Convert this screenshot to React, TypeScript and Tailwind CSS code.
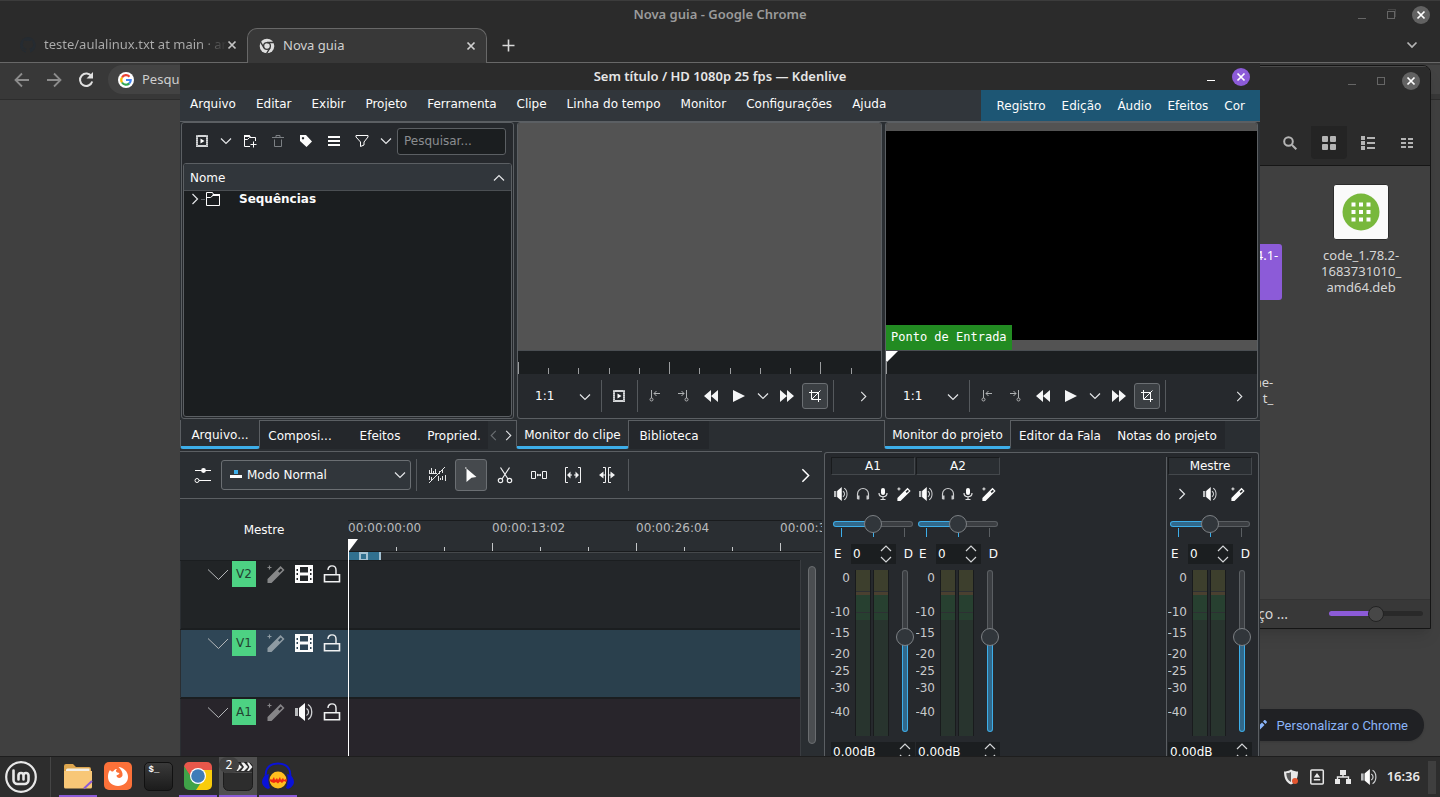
import React from "react";

type IconProps = { className?: string };

function Chevron({ dir = "down", size = 12, className = "text-[#e4e6e8]" }: { dir?: "down" | "up" | "left" | "right"; size?: number; className?: string }) {
  const paths = {
    down: "M1 3.5 6 8.5 11 3.5",
    up: "M1 8.5 6 3.5 11 8.5",
    left: "M8.5 1 3.5 6 8.5 11",
    right: "M3.5 1 8.5 6 3.5 11",
  };
  return (
    <svg width={size} height={size} viewBox="0 0 12 12" className={className} fill="none" stroke="currentColor" strokeWidth="1.2" aria-hidden="true">
      <path d={paths[dir]} />
    </svg>
  );
}

const ClipIcon = () => (
  <svg width="12" height="12" viewBox="0 0 12 12" aria-hidden="true">
    <rect x="1" y="1" width="10" height="10" fill="none" stroke="#d4d6d8" strokeWidth="2" />
    <path d="M1 0v12M11 0v12" stroke="#8d9093" strokeWidth="1" strokeDasharray="1 1" />
    <path d="M4.5 3.5 8.5 6 4.5 8.5z" fill="#fcfcfc" />
  </svg>
);

const FolderPlus = () => (
  <svg width="14" height="14" viewBox="0 0 14 14" fill="none" stroke="#fcfcfc" aria-hidden="true">
    <path d="M7 12.5H1.500V1.500h5l1 2h5V7M1.500 5.500h3l2-2H12" />
    <path d="M1 1h5.500l1 2H1z" fill="#fcfcfc" stroke="none" />
    <path d="M10.500 7.500v6M7.500 10.500h6" />
  </svg>
);

const Folder = () => (
  <svg width="16" height="16" viewBox="0 0 16 16" fill="none" stroke="#fcfcfc" aria-hidden="true" className="shrink-0">
    <path d="M1.500 1.500h6l1 2h6v11h-13zM1.500 6.500h4l2.500-2h6.500" />
    <path d="M8 3h7v2H7z" fill="#fcfcfc" stroke="none" />
  </svg>
);

const Trash = () => (
  <svg width="12" height="12" viewBox="0 0 12 12" fill="none" stroke="#7c8084" aria-hidden="true">
    <path d="M0 2.500h12M4 2.500V.5h4v2M2.500 4.500v7h7v-7" />
  </svg>
);

const Tag = () => (
  <svg width="14" height="14" viewBox="0 0 14 14" fill="#fcfcfc" aria-hidden="true">
    <path fillRule="evenodd" d="M1 1h6l6 6.500L7.500 13 1 7zM4 3a1.200 1.200 0 1 0 .01 0z" />
  </svg>
);

const Lines = () => (
  <svg width="12" height="12" viewBox="0 0 12 12" fill="#fcfcfc" aria-hidden="true">
    <path d="M0 1h12v2H0zM0 5h12v2H0zM0 9h12v2H0z" />
  </svg>
);

const Funnel = () => (
  <svg width="14" height="12" viewBox="0 0 14 12" fill="none" stroke="#fcfcfc" aria-hidden="true">
    <path d="M1 .5h12v1.500L9 7v3L5.500 11.500V7L1 2z" />
  </svg>
);

const MarkIn = () => (
  <svg width="12" height="12" viewBox="0 0 12 12" fill="none" stroke="#aeb1b3" aria-hidden="true">
    <path d="M2.500 0v8M5 3.500h6M7.500 1 5 3.500 7.500 6" />
    <circle cx="2.500" cy="9.500" r="1.500" />
  </svg>
);

const MarkOut = () => (
  <svg width="12" height="12" viewBox="0 0 12 12" fill="none" stroke="#aeb1b3" aria-hidden="true">
    <path d="M9.500 0v8M1 3.500h6M4.500 1 7 3.500 4.500 6" />
    <circle cx="9.500" cy="9.500" r="1.500" />
  </svg>
);

const Rewind = () => (
  <svg width="16" height="12" viewBox="0 0 16 12" fill="#f4f5f6" aria-hidden="true">
    <path d="M8 0v12L1 6zM15 0v12L8 6z" />
  </svg>
);
const Forward = () => (
  <svg width="16" height="12" viewBox="0 0 16 12" fill="#f4f5f6" aria-hidden="true">
    <path d="M1 0v12l7-6zM8 0v12l7-6z" />
  </svg>
);
const Play = () => (
  <svg width="12" height="12" viewBox="0 0 12 12" fill="#f4f5f6" aria-hidden="true">
    <path d="M0 0v12l12-6z" />
  </svg>
);
const Crop = () => (
  <svg width="14" height="14" viewBox="0 0 14 14" fill="none" stroke="#fcfcfc" aria-hidden="true">
    <path d="M3.500 1v9.500H13M1 3.500h9.500V13M4 10 12.500 1.500" />
  </svg>
);

const Speaker = ({ className = "h-3.5 w-3.5" }: IconProps) => (
  <svg viewBox="0 0 18 18" className={className} aria-hidden="true">
    <path d="M0 5h3v8H0z" fill="#b9bbbd" />
    <path d="M4 5 10 0v18l-6-5z" fill="#fcfcfc" />
    <path d="M11.500 5.500a4 4 0 0 1 0 7M13 1.500c5 3 5 12 0 15" fill="none" stroke="#d0d2d4" strokeWidth="1.300" />
  </svg>
);

const Headphones = () => (
  <svg width="14" height="14" viewBox="0 0 14 14" aria-hidden="true">
    <path d="M1.500 12V7a5.500 5.500 0 0 1 11 0v5" fill="none" stroke="#c8cacc" strokeWidth="1.200" />
    <path d="M1.500 8.500h2v4h-2zM10.500 8.500h2v4h-2z" fill="#c8cacc" />
  </svg>
);

const Mic = () => (
  <svg width="12" height="14" viewBox="0 0 12 14" aria-hidden="true">
    <rect x="4" y="1" width="4" height="7" rx="2" fill="#fcfcfc" />
    <path d="M2 6c0 5 8 5 8 0M6 10v2.500M3.500 12.500h5" fill="none" stroke="#e0e1e2" strokeWidth="1.200" />
  </svg>
);

const Wand = ({ className = "h-3.5 w-3.5 text-[#fcfcfc]" }: IconProps) => (
  <svg viewBox="0 0 18 18" className={className} aria-hidden="true">
    <path fillRule="evenodd" fill="currentColor" d="M.5 14 13.500 1 17.500 5 4.500 18H.5zM11 6.200 12.600 7.800 15.400 5 13.800 3.400z" />
    <path d="M2.500 .5v4M.5 2.500h4" stroke="currentColor" strokeWidth="1.200" />
  </svg>
);

const Film = () => (
  <svg width="18" height="18" viewBox="0 0 18 18" aria-hidden="true">
    <path fillRule="evenodd" fill="#fcfcfc" d="M0 0h18v18H0zM5 2v5.500h8V2zM5 10.500V16h8v-5.500zM1.500 4v2H3V4zM15 4v2h1.500V4zM1.500 8v2H3V8zM15 8v2h1.500V8zM1.500 13v2H3v-2zM15 13v2h1.500v-2z" />
  </svg>
);

const Lock = () => (
  <svg width="18" height="18" viewBox="0 0 18 18" fill="none" stroke="#f0f1f2" aria-hidden="true">
    <path strokeWidth="1.600" d="M1.500 9.800h15v7h-15z" />
    <path strokeWidth="1.400" d="M5 5c0-5.500 8-5.500 8 0v4.500" />
  </svg>
);

const CloseX = ({ className }: IconProps) => (
  <svg width="10" height="10" viewBox="0 0 10 10" className={className} stroke="currentColor" strokeWidth="1.700" aria-hidden="true">
    <path d="m1.500 1.500 7 7M8.500 1.500l-7 7" />
  </svg>
);

const ChromeMono = () => (
  <svg width="16" height="16" viewBox="0 0 16 16" aria-hidden="true">
    <circle cx="8" cy="8" r="7.300" fill="#dedede" />
    <circle cx="8" cy="8" r="3.400" fill="#dedede" stroke="#383838" strokeWidth="1.300" />
    <path d="M8 4.500h7M5 9.800 1.500 3.800M11 9.800l-3.500 5.800" stroke="#383838" strokeWidth="1.300" />
  </svg>
);

function WinButton({ label, active = false }: { label: string; active?: boolean }) {
  return (
    <button aria-label={label} className={`flex h-[18px] w-[18px] items-center justify-center rounded-full text-white ${active ? "bg-[#8c5bd8]" : "bg-[#626262]"}`}>
      <CloseX />
    </button>
  );
}

/* ---------- Browser window ---------- */

function Browser() {
  return (
    <section className="absolute inset-0 flex flex-col bg-[#404040] font-['Noto_Sans',sans-serif]">
      <header className="flex h-7 items-center border-t border-[#3c3c3c] bg-[#2b2b2b]">
        <div className="flex-1 pl-[10px]" />
        <h1 className="text-[13px] font-semibold text-[#9b9b9b]">Nova guia - Google Chrome</h1>
        <div className="flex flex-1 items-center justify-end gap-[17px] pr-[10px] text-[#666]">
          <button aria-label="Minimizar" className="mr-1 h-2 w-2 border-b border-current" />
          <button aria-label="Restaurar" className="relative h-2 w-2 border border-current">
            <span className="absolute -top-[3px] left-0 h-2 w-2 border-t border-r border-[#454545]" />
          </button>
          <WinButton label="Fechar" />
        </div>
      </header>
      <nav className="flex h-[35px] bg-[#2b2b2b] text-[13px]">
        <div className="flex w-[247px] items-center border-b border-[#686868] pr-[10px] pl-[20px] text-[#adadad]">
          <svg width="16" height="16" viewBox="0 0 16 16" aria-hidden="true" className="mr-2 shrink-0">
            <path fill="#252b31" d="M8 0a8 8 0 0 0-2.500 15.600c.4 0 .5-.2.500-.4v-1.500c-2.200.5-2.700-1-2.700-1-.4-.9-.9-1.100-.9-1.100-.7-.5.1-.5.1-.5.8.1 1.200.8 1.200.8.700 1.200 1.900.9 2.300.7.100-.5.300-.9.500-1.100-1.800-.2-3.600-.9-3.600-4 0-.9.300-1.600.8-2.200-.1-.2-.4-1 .1-2.100 0 0 .7-.2 2.200.8a7.600 7.600 0 0 1 4 0c1.500-1 2.200-.8 2.200-.8.500 1.100.2 1.900.1 2.100.5.600.8 1.300.8 2.200 0 3.100-1.900 3.700-3.700 3.900.300.300.600.800.600 1.500v2.200c0 .2.100.5.500.4A8 8 0 0 0 8 0z" />
          </svg>
          <a href="#teste" className="min-w-0 flex-1 overflow-hidden bg-gradient-to-r from-[#adadad] from-85% to-[#2b2b2b] bg-clip-text whitespace-nowrap text-transparent">teste/aulalinux.txt at main · ar</a>
          <button aria-label="Fechar aba" className="text-[#c4c4c4]"><CloseX /></button>
        </div>
        <div className="flex w-[240px] items-center gap-2 rounded-t-[10px] border border-b-0 border-[#686868] bg-[#383838] pr-[10px] pl-[11px] text-[#d0d0d0]">
          <ChromeMono />
          <a href="#nova" className="flex-1">Nova guia</a>
          <button aria-label="Fechar aba" className="text-[#d0d0d0]"><CloseX /></button>
        </div>
        <div className="flex flex-1 items-center justify-between border-b border-[#686868] pr-[22px] pl-[15px] text-[#d8d8d8]">
          <button aria-label="Nova aba">
            <svg width="13" height="13" viewBox="0 0 13 13" stroke="currentColor" strokeWidth="1.600" aria-hidden="true"><path d="M6.500.5v12M.5 6.500h12" /></svg>
          </button>
          <button aria-label="Pesquisar abas">
            <svg width="12" height="12" viewBox="0 0 12 12" fill="none" stroke="#b5b5b5" strokeWidth="1.700" aria-hidden="true"><path d="m1.500 3.500 4.500 4.500 4.500-4.500" /></svg>
          </button>
        </div>
      </nav>
      <div className="flex h-[37px] items-center gap-4 border-b border-[#2c2c2c] bg-[#383838] pb-[3px] pl-[14px]">
        <button aria-label="Voltar">
          <svg width="16" height="16" viewBox="0 0 16 16" fill="none" stroke="#8c8c8c" strokeWidth="1.800" aria-hidden="true"><path d="M15 8H2M8 1.500 1.500 8 8 14.500" /></svg>
        </button>
        <button aria-label="Avançar">
          <svg width="16" height="16" viewBox="0 0 16 16" fill="none" stroke="#8c8c8c" strokeWidth="1.800" aria-hidden="true"><path d="M1 8h13M8 1.500 14.500 8 8 14.500" /></svg>
        </button>
        <button aria-label="Recarregar">
          <svg width="16" height="16" viewBox="0 0 16 16" fill="none" stroke="#e0e0e0" strokeWidth="2" aria-hidden="true"><path d="M13.500 4.500A6.200 6.200 0 1 0 14.200 9.500" /><path d="M15 0v6.500H8.500z" fill="#e0e0e0" stroke="none" /></svg>
        </button>
        <div className="-ml-[2px] flex h-[29px] flex-1 items-center gap-2 rounded-l-full bg-[#434343] pl-[10px]">
          <svg width="16" height="16" viewBox="0 0 16 16" aria-hidden="true" className="shrink-0">
            <circle cx="8" cy="8" r="8" fill="#fff" />
            <g fill="none" strokeWidth="2.200">
              <path stroke="#ea4335" d="M4 5.500a4.700 4.700 0 0 1 7.500-.8" />
              <path stroke="#fbbc05" d="M4 10.500a4.700 4.700 0 0 1 0-5" />
              <path stroke="#34a853" d="M11.300 11.400A4.700 4.700 0 0 1 4 10.500" />
              <path stroke="#4285f4" d="M8 8h4.700a4.700 4.700 0 0 1-1.500 3.500" />
            </g>
          </svg>
          <span className="text-[13px] text-[#cfcfcf]">Pesqu</span>
        </div>
      </div>
      <div className="flex flex-1 items-end justify-end p-4">
        <button className="-mb-px flex h-8 items-center gap-2 rounded-full bg-[#202124] pt-px pr-4 pl-7 font-[Roboto,sans-serif] text-[13px] text-[#8ab4f8] shadow">
          <svg width="14" height="14" viewBox="0 0 14 14" fill="#8ab4f8" aria-hidden="true"><path d="M1 10.500V13h2.500l7-7L8 3.500zM12.700 3.800c.4-.4.4-.8 0-1.200l-1.300-1.300c-.4-.4-.8-.4-1.200 0L9 2.500 11.500 5z" /></svg>
          Personalizar o Chrome
        </button>
      </div>
    </section>
  );
}

/* ---------- File manager window ---------- */

function FileManager() {
  return (
    <section className="absolute top-[65px] right-[9px] left-[86%] flex h-[564px] flex-col overflow-hidden rounded-t-lg border border-[#151515] bg-[#404040] font-['Noto_Sans',sans-serif] text-[13px] text-[#d6d6d6] shadow-lg">
      <header className="flex h-7 items-center justify-end gap-[17px] border-t border-[#4a4a4a] bg-[#2b2b2b] pr-[10px] text-[#666]">
        <button aria-label="Minimizar" className="mr-1 h-2 w-2 border-b border-current" />
        <button aria-label="Maximizar" className="h-2 w-2 border border-current" />
        <WinButton label="Fechar" />
      </header>
      <div className="flex h-[72px] items-end justify-end border-b border-[#161616] bg-[#2b2b2b] pr-[5px] pb-[6px] text-[#b4b4b4]">
        <button aria-label="Pesquisar" className="flex h-[33px] w-[42px] items-center justify-center">
          <svg width="14" height="14" viewBox="0 0 14 14" fill="none" stroke="currentColor" strokeWidth="2" aria-hidden="true"><circle cx="5.500" cy="5.500" r="4.300" /><path d="m9 9 4.300 4.300" /></svg>
        </button>
        <button aria-label="Ícones" className="flex h-[33px] w-9 items-center justify-center rounded-b bg-[#242424]">
          <svg width="14" height="14" viewBox="0 0 14 14" fill="currentColor" aria-hidden="true"><rect width="6" height="6" rx="1" /><rect x="8" width="6" height="6" rx="1" /><rect y="8" width="6" height="6" rx="1" /><rect x="8" y="8" width="6" height="6" rx="1" /></svg>
        </button>
        <button aria-label="Lista" className="flex h-[33px] w-[42px] items-center justify-center">
          <svg width="14" height="14" viewBox="0 0 14 14" fill="currentColor" aria-hidden="true"><path d="M0 0h4v4H0zM0 5h4v4H0zM0 10h4v4H0zM6 1h8v2H6zM6 6h8v2H6zM6 11h8v2H6z" /></svg>
        </button>
        <button aria-label="Compacto" className="flex h-[33px] w-[36px] items-center justify-center">
          <svg width="12" height="12" viewBox="0 0 12 12" fill="currentColor" aria-hidden="true"><path d="M0 1h5v2H0zM7 1h5v2H7zM0 5h5v2H0zM7 5h5v2H7zM0 9h5v2H0zM7 9h5v2H7z" /></svg>
        </button>
      </div>
      <div className="flex flex-1 justify-end gap-[29px] pr-[19px] leading-4">
        <div className="flex w-[43px] flex-col items-end">
          <p className="mt-[78px] h-14 w-full rounded-[3px] bg-[#8c5bd8] pt-[3px] pr-1 text-right text-white">4.1-</p>
          <p className="mt-[74px] pr-[9px] text-right">ne-<br />t_</p>
        </div>
        <figure className="mt-[18px] flex w-[100px] flex-col items-center gap-[7px]">
          <div className="flex h-14 w-14 items-center justify-center rounded-[3px] border border-[#2c2c2c] bg-[#fafafa]">
            <svg width="38" height="38" viewBox="0 0 38 38" aria-hidden="true">
              <circle cx="19" cy="19" r="18.500" fill="#78b83c" />
              <path d="M11.500 9.500v19M19 9.500v19M26.500 9.500v19" stroke="#fff" strokeWidth="4" strokeDasharray="4 3.500" />
            </svg>
          </div>
          <figcaption className="text-center">code_1.78.2-<br />1683731010_<br />amd64.deb</figcaption>
        </figure>
      </div>
      <footer className="flex h-[29px] items-center justify-end gap-[41px] border-t border-[#333] bg-[#383838] pr-[7px] pb-px">
        <span className="text-[14px]">ço ...</span>
        <input
          type="range"
          aria-label="Zoom"
          defaultValue={50}
          className="h-[5px] w-[94px] appearance-none rounded-full bg-[linear-gradient(to_right,#8c5bd8_50%,#292929_50%)] [&::-webkit-slider-thumb]:h-4 [&::-webkit-slider-thumb]:w-4 [&::-webkit-slider-thumb]:appearance-none [&::-webkit-slider-thumb]:rounded-full [&::-webkit-slider-thumb]:border [&::-webkit-slider-thumb]:border-[#222] [&::-webkit-slider-thumb]:bg-[#474747]"
        />
      </footer>
    </section>
  );
}

/* ---------- Editor window ---------- */

function DockTabs({ tabs, scroll = false }: { tabs: { name: string; width: string }[]; scroll?: boolean }) {
  return (
    <div role="tablist" className="mt-px mb-[2px] flex h-[29px] bg-[#2a2e32]">
      {tabs.map((t, i) => (
        <button
          key={t.name}
          role="tab"
          aria-selected={i === 0}
          className={`${t.width} shrink-0 overflow-hidden text-center whitespace-nowrap ${
            i === 0 ? "rounded-b-[3px] border-x border-b-[3px] border-x-[#5b5f63] border-b-[#3daee9] pt-[3px]" : "border-t border-[#5b5f63] bg-[#24272b] pt-px"
          }`}
        >
          {t.name}
        </button>
      ))}
      <div className="flex flex-1 items-center justify-end gap-1 border-t border-[#5b5f63]">
        {scroll && (
          <>
            <button aria-label="Abas anteriores"><Chevron dir="left" size={11} className="text-[#6b6f73]" /></button>
            <button aria-label="Próximas abas" className="pr-[3px]"><Chevron dir="right" size={11} /></button>
          </>
        )}
      </div>
    </div>
  );
}

function Dock({ children, tabs, scroll }: { children: React.ReactNode; tabs: { name: string; width: string }[]; scroll?: boolean }) {
  return (
    <section className="flex min-w-0 flex-col">
      <div className="mr-[2px] ml-px flex h-[297px] flex-col overflow-hidden rounded-[3px] border border-[#5b5f63] bg-[#26292d]">{children}</div>
      <DockTabs tabs={tabs} scroll={scroll} />
    </section>
  );
}

function Bin() {
  const tools = [
    { label: "Adicionar clipe", w: "w-7", icon: <ClipIcon /> },
    { label: "Mais opções", w: "w-5", icon: <Chevron /> },
    { label: "Criar pasta", w: "w-7", icon: <FolderPlus /> },
    { label: "Excluir", w: "w-7", icon: <Trash /> },
    { label: "Etiquetas", w: "w-7", icon: <Tag /> },
    { label: "Menu", w: "w-7", icon: <Lines /> },
    { label: "Filtro", w: "w-7", icon: <Funnel /> },
    { label: "Opções de filtro", w: "w-5", icon: <Chevron /> },
  ];
  return (
    <>
      <div className="flex h-10 items-center pb-1 pl-[6px]">
        {tools.map((t) => (
          <button key={t.label} aria-label={t.label} className={`${t.w} flex h-7 shrink-0 items-center justify-center`}>
            {t.icon}
          </button>
        ))}
        <input
          type="text"
          aria-label="Pesquisar"
          placeholder="Pesquisar..."
          className="mr-[7px] ml-px h-[27px] min-w-0 flex-1 rounded-[3px] border border-[#5b5f63] bg-[#1b1e20] px-[6px] placeholder:text-[#8a8d90]"
        />
      </div>
      <div className="mx-px mb-px flex flex-1 flex-col overflow-hidden rounded-[3px] border border-[#5b5f63] bg-[#1b1e20]">
        <button className="flex h-[27px] items-center justify-between border-b border-[#4b4f53] bg-[#31363b] px-[6px] pt-px">
          Nome
          <Chevron dir="up" />
        </button>
        <div className="flex h-4 items-center pl-[5px]">
          <Chevron dir="right" size={12} className="shrink-0 text-[#e4e6e8]" />
          <span className="w-1 border-t border-[#5b5f63]" />
          <Folder />
          <span className="pl-[18px] font-bold">Sequências</span>
        </div>
      </div>
    </>
  );
}

function Sep() {
  return <span className="h-8 w-px shrink-0 bg-[#55595d]" />;
}

function MonitorControls({ withClip = false }: { withClip?: boolean }) {
  const cell = "flex h-7 w-7 shrink-0 items-center justify-center";
  return (
    <div className="flex h-11 items-center">
      <div className="relative w-[83px] shrink-0">
        <select aria-label="Escala" className="w-full appearance-none bg-transparent pl-[17px]">
          <option>1:1</option>
        </select>
        <span className="pointer-events-none absolute top-1 right-[10px]"><Chevron /></span>
      </div>
      <Sep />
      {withClip && (
        <>
          <button aria-label="Clipe" className="flex h-7 w-[35px] shrink-0 items-center justify-center pr-px"><ClipIcon /></button>
          <Sep />
        </>
      )}
      <span className="w-[3px]" />
      <button aria-label="Marcar entrada" className={cell}><MarkIn /></button>
      <button aria-label="Marcar saída" className={cell}><MarkOut /></button>
      <button aria-label="Retroceder" className={cell}><Rewind /></button>
      <button aria-label="Reproduzir" className={cell}><Play /></button>
      <button aria-label="Opções de reprodução" className="flex h-7 w-5 shrink-0 items-center justify-center"><Chevron /></button>
      <button aria-label="Avançar" className={cell}><Forward /></button>
      <button aria-label="Recortar" className="ml-px flex h-[26px] w-[26px] shrink-0 items-center justify-center rounded-[3px] border border-[#6b6f73] bg-[#3b3f43]"><Crop /></button>
      <span className="w-[5px]" />
      <Sep />
      <button aria-label="Mais" className="ml-auto flex h-7 w-[35px] items-center justify-center"><Chevron dir="right" size={11} /></button>
    </div>
  );
}

function ClipMonitor() {
  return (
    <>
      <div className="flex-1 bg-[#535353]" />
      <div className="h-6 overflow-hidden border-t border-[#4a4e52] bg-[#1b1e20]">
        <svg width="100%" height="23" aria-hidden="true">
          {[0, 30, 60, 91, 121, 151, 181, 212, 242, 272, 302, 333].map((x, i) => (
            <path key={x} d={`M${x + 0.5} ${i % 5 === 0 ? 11 : 17}V23`} stroke="#9b9d9f" />
          ))}
        </svg>
      </div>
      <MonitorControls withClip />
    </>
  );
}

function ProjectMonitor() {
  return (
    <>
      <div className="relative flex-1 bg-[#535353] pt-2 pb-[10px]">
        <div className="h-full bg-black" />
        <span className="absolute bottom-0 left-0 bg-[#228b22] px-[5px] py-1 font-['DejaVu_Sans_Mono',monospace] text-[12px] leading-[17px] whitespace-nowrap text-white">Ponto de Entrada</span>
      </div>
      <div className="h-6 border-t border-[#4a4e52] bg-[#1b1e20]">
        <svg width="13" height="23" aria-hidden="true" className="block">
          <path d="M0 0h12L0 12z" fill="#fff" />
          <path d="M.5 10v13" stroke="#9b9d9f" />
        </svg>
      </div>
      <MonitorControls />
    </>
  );
}

function TimelineToolbar() {
  const cell = "flex h-8 w-[34px] shrink-0 items-center justify-center";
  return (
    <div className="flex h-12 items-center border-y border-[#5b5f63]">
      <button aria-label="Configurações de trilha" className="ml-[14px] flex h-8 w-[27px] items-center">
        <svg width="18" height="18" viewBox="0 0 18 18" fill="none" stroke="#fcfcfc" aria-hidden="true">
          <path d="M1 4.500h16M5 14.500h12" />
          <circle cx="9.500" cy="4.500" r="2.400" fill="#fcfcfc" stroke="none" />
          <circle cx="3" cy="14.500" r="2" />
        </svg>
      </button>
      <div className="relative h-[30px] w-[190px] shrink-0">
        <select aria-label="Modo de edição" className="h-full w-full appearance-none rounded-[3px] border border-[#6b6f73] bg-[#31363b] pl-[25px]">
          <option>Modo Normal</option>
        </select>
        <svg width="12" height="12" viewBox="0 0 12 12" aria-hidden="true" className="pointer-events-none absolute top-[9px] left-[9px]">
          <path d="M4 1h4v4H4z" fill="#3daee9" />
          <path d="M0 6h12v3H0z" fill="#fcfcfc" />
        </svg>
        <span className="pointer-events-none absolute top-[9px] right-[5px]"><Chevron /></span>
      </div>
      <span className="w-[5px]" />
      <Sep />
      <button aria-label="Mixar clipes" className="ml-[3px] flex h-8 w-[34px] items-center justify-center">
        <svg width="18" height="16" viewBox="0 0 18 16" fill="none" stroke="#e4e5e6" aria-hidden="true">
          <path d="M17 0 1 16M1.500 3v3M3.500 1v5M5.500 4v2M7.500 2v4M1 6.500h8M11.500 4v3M14.500 3v3M1.500 9v4M3.500 10v3M10.500 9v5M12.500 11v2M14.500 9v4M17.500 8v6" />
        </svg>
      </button>
      <button aria-label="Selecionar" className="ml-px flex h-8 w-8 items-center justify-center rounded-[3px] border border-[#6b6f73] bg-[#45494d]">
        <svg width="16" height="16" viewBox="0 0 16 16" aria-hidden="true"><path d="m3.500 1.500 10 8.500-5 .8-5 4.200z" fill="#fcfcfc" /><path d="M2 1h1.500" stroke="#fcfcfc" /></svg>
      </button>
      <button aria-label="Lâmina" className={`${cell} ml-px`}>
        <svg width="16" height="17" viewBox="0 0 16 17" fill="none" stroke="#f0f1f2" strokeWidth="1.200" aria-hidden="true">
          <path d="M3.500.5 11 12M12.500.5 5 12" /><circle cx="3.500" cy="13.500" r="2.200" /><circle cx="12.500" cy="13.500" r="2.200" />
        </svg>
      </button>
      <button aria-label="Espaçador" className={cell}>
        <svg width="16" height="10" viewBox="0 0 16 10" fill="none" stroke="#f0f1f2" aria-hidden="true"><path d="M.5 1.500h4v7h-4zM11.500 1.500h4v7h-4zM6 5h4" /><path d="M6 3.500v3L8 5zM10 3.500v3L8 5z" fill="#f0f1f2" stroke="none" /></svg>
      </button>
      <button aria-label="Deslizar" className={cell}>
        <svg width="16" height="16" viewBox="0 0 16 16" fill="none" stroke="#f0f1f2" aria-hidden="true"><path d="M3 .5H.5v15H3M13 .5h2.500v15H13M3 8h4M9 8h4" /><path d="M5.500 4.500v7L2 8zM10.500 4.500v7L14 8z" fill="#f0f1f2" stroke="none" /></svg>
      </button>
      <button aria-label="Ondular" className={cell}>
        <svg width="16" height="16" viewBox="0 0 16 16" fill="none" stroke="#f0f1f2" aria-hidden="true"><path d="M4 .5h2.500v15H4M12 .5H9.500v15H12M3 8h3M10 8h3" /><path d="M4.500 4.500v7L0 8zM11.500 4.500v7L16 8z" fill="#f0f1f2" stroke="none" /></svg>
      </button>
      <span className="w-1" />
      <Sep />
      <button aria-label="Mais ferramentas" className="ml-auto flex h-8 w-[34px] items-center justify-center"><Chevron dir="right" size={15} className="text-white" /></button>
    </div>
  );
}

const tracks = [
  { name: "V2", video: true, head: "bg-[#212426]", lane: "bg-[#232629]", wand: "text-[#868788]" },
  { name: "V1", video: true, head: "bg-[#2f4656]", lane: "bg-[#2a404d]", wand: "text-[#8e9ba3]" },
  { name: "A1", video: false, head: "bg-[#28252b]", lane: "bg-[#28252b]", wand: "text-[#868588]" },
];

function Timeline() {
  return (
    <section className="flex min-w-0 flex-col overflow-hidden pr-[2px]">
      <TimelineToolbar />
      <div className="relative flex flex-1 flex-col overflow-hidden">
        <div className="flex h-[61px] shrink-0">
          <div className="w-[168px] shrink-0 pt-[22px] text-center">Mestre</div>
          <div className="mt-[21px] flex min-w-0 flex-1 flex-col overflow-hidden border-t border-[#191b1d]">
            <div className="flex h-[15px] shrink-0 leading-[15px] text-[#b9bbbd]">
              {["00:00:00:00", "00:00:13:02", "00:00:26:04", "00:00:39:06"].map((t) => (
                <span key={t} className="w-36 shrink-0">{t}</span>
              ))}
            </div>
            <svg width="100%" height="16" className="shrink-0 border-b border-[#191b1d]" aria-hidden="true">
              {[48, 96, 144, 192, 240, 288, 336, 384, 432].map((x) => (
                <path key={x} d={`M${x + 0.5} ${x % 144 === 0 ? 7 : 11}V15`} stroke="#c4c6c8" />
              ))}
            </svg>
            <div className="flex h-[9px] border-t border-[#45484b]">
              <div className="-mt-px flex h-[9px] w-[33px] items-center justify-center border-r-2 border-[#a3c1d2] bg-[#31708f]">
                <span className="h-[9px] w-[9px] border-2 border-[#a3c1d2]" />
              </div>
            </div>
          </div>
        </div>
        <div className="flex flex-1 overflow-hidden">
          <div className="min-w-0 flex-1">
            {tracks.map((t) => (
              <div key={t.name} className="flex h-[69px] border-t border-[#1b1e20]">
                <div className={`${t.head} ml-px flex w-[167px] shrink-0 items-start border-b border-[#1b1e20] pl-[27px]`}>
                  <button aria-label={`Recolher ${t.name}`} className="mt-2">
                    <svg width="20" height="12" viewBox="0 0 20 12" fill="none" stroke="#b4b7b9" aria-hidden="true" className="block"><path d="M0 .5 10.500 10.500 20.500.5" /></svg>
                  </button>
                  <button className="ml-1 h-[26px] w-6 bg-[#4dd283] text-[#234232]">{t.name}</button>
                  <button aria-label="Efeitos da trilha" className="mt-1 ml-[11px]"><Wand className={`block h-[18px] w-[18px] ${t.wand}`} /></button>
                  <button aria-label={t.video ? "Ocultar" : "Silenciar"} className="mt-1 ml-[10px]">{t.video ? <Film /> : <Speaker className="h-[18px] w-[18px]" />}</button>
                  <button aria-label="Bloquear" className="mt-1 ml-[10px]"><Lock /></button>
                </div>
                <div className={`${t.lane} flex-1 border-b border-[#1b1e20]`} />
              </div>
            ))}
          </div>
          <div className="flex w-[22px] justify-center border-l border-[#3a3d41] pt-[6px]">
            <div className="h-[178px] w-2 rounded-full border border-[#6a6d70] bg-[#4b4e51]" />
          </div>
        </div>
        <svg width="12" height="100%" className="absolute top-10 left-[168px]" aria-hidden="true">
          <path d="M0 0h10L1 12H0z" fill="#fff" />
          <path d="M.5 0V400" stroke="#fff" />
        </svg>
      </div>
    </section>
  );
}

function SpinArrows() {
  return (
    <svg width="12" height="18" viewBox="0 0 12 18" fill="none" stroke="#d4d6d8" strokeWidth="1.200" aria-hidden="true" className="shrink-0">
      <path d="m1 6 5-5 5 5M1 12l5 5 5-5" />
    </svg>
  );
}

const thumb =
  "[&::-webkit-slider-thumb]:h-[18px] [&::-webkit-slider-thumb]:w-[18px] [&::-webkit-slider-thumb]:appearance-none [&::-webkit-slider-thumb]:rounded-full [&::-webkit-slider-thumb]:border [&::-webkit-slider-thumb]:border-[#7c8084] [&::-webkit-slider-thumb]:bg-[#31363b]";

function Meter() {
  return (
    <div className="h-[166px] w-4 border-x border-[#191b1d]">
      <div className="h-[21px] bg-[#3d3f2d]" />
      <div className="h-1 border-t border-[#2d3033] bg-[#4a4030]" />
      <div className="h-[17px] bg-[#274030]" />
      <div className="h-2 border-t border-[#2d3033] bg-[#274030]" />
      <div className="h-[116px] bg-[#28342e]" />
    </div>
  );
}

const scale = [
  { v: "0", m: "" },
  { v: "-10", m: "mt-[18px]" },
  { v: "-15", m: "mt-[5px]" },
  { v: "-20", m: "mt-[5px]" },
  { v: "-25", m: "mt-px" },
  { v: "-30", m: "mt-px" },
  { v: "-40", m: "mt-2" },
];

function Channel({ name, master = false }: { name: string; master?: boolean }) {
  return (
    <div className="w-[84px] shrink-0">
      <h2 className="h-[18px] border border-[#44484c] border-t-[#191b1d] border-l-[#191b1d] bg-[#2a2e32] text-center leading-4">{name}</h2>
      <div className={`mt-[9px] flex h-5 items-center justify-between ${master ? "pr-[7px] pl-2" : "pr-1 pl-[3px]"}`}>
        {master && <button aria-label="Mostrar"><Chevron dir="right" /></button>}
        <button aria-label="Silenciar"><Speaker /></button>
        {!master && <button aria-label="Solo"><Headphones /></button>}
        {!master && <button aria-label="Gravar"><Mic /></button>}
        <button aria-label="Efeitos"><Wand /></button>
      </div>
      <div className="mt-[17px] ml-[2px] w-20">
        <input
          type="range"
          aria-label="Balanço"
          min={-50}
          max={50}
          defaultValue={0}
          className={`relative z-10 block h-[6px] w-full appearance-none rounded-full border border-transparent [background:linear-gradient(to_right,#31688a_50%,#3b3e42_50%)_padding-box,linear-gradient(to_right,#3daee9_50%,#5b5f63_50%)_border-box] ${thumb}`}
        />
        <div className="mt-px flex h-[9px] justify-between px-2">
          <span className="w-px bg-[#3daee9]" />
          <span className="w-px bg-[#3daee9]" />
          <span className="w-px bg-[#5b5f63]" />
        </div>
      </div>
      <div className="mt-[7px] flex h-5 items-center pr-[2px] pl-[3px]">
        <span className="w-[17px]">E</span>
        <label className="flex h-5 w-[45px] items-center bg-[#1b1e20] pr-1 pl-[2px]">
          <input aria-label="Balanço" defaultValue="0" className="min-w-0 flex-1 bg-transparent" />
          <SpinArrows />
        </label>
        <span className="ml-auto">D</span>
      </div>
      <div className="mt-[6px] flex h-[166px]">
        <div className="flex w-[19px] flex-col items-end overflow-hidden leading-4 text-[#c8cacc]">
          {scale.map((s) => (
            <span key={s.v} className={`${s.m} h-4`}>{s.v}</span>
          ))}
        </div>
        <div className="ml-[5px] flex gap-[2px]">
          <Meter />
          <Meter />
        </div>
        <input
          type="range"
          aria-label="Volume"
          defaultValue={60}
          className={`my-[2px] ml-[13px] h-[162px] w-[6px] appearance-none rounded-full border border-transparent [background:linear-gradient(to_top,#31688a_60%,#3b3e42_60%)_padding-box,linear-gradient(to_top,#3daee9_60%,#5b5f63_60%)_border-box] [direction:rtl] [writing-mode:vertical-lr] ${thumb}`}
        />
      </div>
      <label className="mt-[6px] flex h-5 items-center bg-[#1b1e20] pr-1 pl-[2px]">
        <input aria-label="Ganho" defaultValue="0.00dB" className="min-w-0 flex-1 bg-transparent" />
        <SpinArrows />
      </label>
    </div>
  );
}

function Editor() {
  const menu = ["Arquivo", "Editar", "Exibir", "Projeto", "Ferramenta", "Clipe", "Linha do tempo", "Monitor", "Configurações", "Ajuda"];
  const layouts = ["Registro", "Edição", "Áudio", "Efeitos", "Cor"];
  return (
    <section className="absolute top-[63px] bottom-0 left-[12.5%] flex w-3/4 flex-col overflow-hidden bg-[#2a2e32] font-['DejaVu_Sans',sans-serif] text-[12px] text-[#fcfcfc]">
      <header className="flex h-[27px] shrink-0 items-center bg-[#2b2b2b]">
        <div className="flex-1 pl-[10px]" />
        <h1 className="font-['Noto_Sans',sans-serif] text-[13px] font-semibold text-[#e6e6e6]">Sem título / HD 1080p 25 fps — Kdenlive</h1>
        <div className="flex flex-1 items-center justify-end gap-[17px] pr-[10px]">
          <button aria-label="Minimizar" className="h-2 w-2 border-b border-white" />
          <WinButton label="Fechar" active />
        </div>
      </header>
      <div className="flex h-8 shrink-0 border-b border-[#5b5f63] bg-[#31363b]">
        <nav className="flex flex-1 items-center gap-5 pb-[3px] pl-[10px] whitespace-nowrap">
          {menu.map((m) => <button key={m}>{m}</button>)}
        </nav>
        <nav className="flex items-center gap-4 bg-[#1d5674] px-[15px]">
          {layouts.map((m) => <button key={m}>{m}</button>)}
        </nav>
      </div>
      <div className="grid shrink-0 grid-cols-[336fr_368fr_376fr]">
        <Dock
          scroll
          tabs={[
            { name: "Arquivo...", width: "w-20" },
            { name: "Composi...", width: "w-20" },
            { name: "Efeitos", width: "w-20" },
            { name: "Propried.", width: "w-[68px]" },
          ]}
        >
          <Bin />
        </Dock>
        <Dock tabs={[{ name: "Monitor do clipe", width: "w-[113px]" }, { name: "Biblioteca", width: "w-20" }]}>
          <ClipMonitor />
        </Dock>
        <Dock tabs={[{ name: "Monitor do projeto", width: "w-[127px]" }, { name: "Editor da Fala", width: "w-[98px]" }, { name: "Notas do projeto", width: "w-[116px]" }]}>
          <ProjectMonitor />
        </Dock>
      </div>
      <div className="grid min-h-0 flex-1 grid-cols-[644fr_436fr]">
        <Timeline />
        <section className="mt-px mr-px flex overflow-hidden rounded-t-[3px] border border-b-0 border-[#5b5f63] bg-[#26292d] pt-1 pl-[6px]">
          <div className="flex flex-1 gap-px">
            <Channel name="A1" />
            <Channel name="A2" />
          </div>
          <div className="border-l border-[#5b5f63] pr-[6px] pl-px">
            <Channel name="Mestre" master />
          </div>
        </section>
      </div>
    </section>
  );
}

/* ---------- Panel ---------- */

const apps = [
  {
    name: "Arquivos",
    open: true,
    active: false,
    icon: (
      <svg width="30" height="28" viewBox="0 0 30 28" aria-hidden="true">
        <path d="M1 4q0-2 2-2h7l3 3h13q2 0 2 2v10H1z" fill="#dda64e" />
        <path d="M3 8q0-1.500 1.500-1.500h22v4H3z" fill="#f4efe6" />
        <path d="M1 9h28v16q0 1.500-1.500 1.500h-25Q1 26.500 1 25z" fill="#f8c777" />
        <path d="m21 26.500 8-7.500" stroke="#8c5bd8" strokeWidth="2" />
      </svg>
    ),
  },
  {
    name: "Firefox",
    open: false,
    active: false,
    icon: (
      <svg width="28" height="28" viewBox="0 0 28 28" aria-hidden="true">
        <rect width="28" height="28" rx="5" fill="#fc7139" />
        <path d="M6 8c1 1 1.500 1.500 3 1.500C11 7 12 7 13 7c-2 2-1 3.500 2.500 4-.5 2-2 1.500-3 2.500 0 3 5 3.500 6 0 .5-3-1.500-6-4-8.500 5 .5 9.500 4.500 9.500 10 0 5.500-4.500 9-10 9s-10-3.500-10-9c0-3 .5-5 2-7z" fill="#fff" />
      </svg>
    ),
  },
  {
    name: "Terminal",
    open: false,
    active: false,
    icon: (
      <span className="flex h-[29px] w-[29px] items-start rounded-[5px] border border-[#111] bg-gradient-to-b from-[#3a3a3a] to-[#1c1c1c] pt-[3px] pl-1 font-['Liberation_Mono',monospace] text-[9px] leading-[9px] font-bold text-white">$_</span>
    ),
  },
  {
    name: "Chrome",
    open: true,
    active: false,
    icon: (
      <svg width="28" height="28" viewBox="0 0 28 28" aria-hidden="true">
        <clipPath id="chromeClip"><rect width="28" height="28" rx="5" /></clipPath>
        <g clipPath="url(#chromeClip)">
          <path d="M0 0h28v8H14L8 17 0 5z" fill="#e9574b" />
          <path d="M0 4l9 14 8 3-4 7H0z" fill="#3fa348" />
          <path d="M14 8h14v20H12l8-12z" fill="#f9cc0b" />
        </g>
        <circle cx="14" cy="14" r="8" fill="#fff" />
        <circle cx="14" cy="14" r="6.800" fill="#3f7cb8" />
      </svg>
    ),
  },
  {
    name: "Kdenlive",
    open: true,
    active: true,
    icon: (
      <span className="relative block">
        <svg width="30" height="30" viewBox="0 0 30 30" aria-hidden="true" className="block">
          <rect x=".5" y="1.500" width="29" height="28" rx="5" fill="#2d2d2d" stroke="#1c1c1c" />
          <path d="M1 11.500h28" stroke="#4b4b4b" />
          <path d="M11 1.500h3l5 4.500-4 4h-3l3-4zM18 1.500h3l4 4.500-4 4h-3l3-4zM24 1.500h2l3.500 4.500-3.500 4h-2l2.500-4z" fill="#f2f2f2" />
        </svg>
        <span className="absolute -top-1 -left-1 flex h-4 w-5 items-center justify-center rounded-full bg-[#414141] text-[12px] text-white">2</span>
      </span>
    ),
  },
  {
    name: "Audacity",
    open: true,
    active: false,
    icon: (
      <svg width="32" height="28" viewBox="0 0 32 28" aria-hidden="true">
        <ellipse cx="16" cy="18" rx="8.500" ry="8.500" fill="#ffbf1f" />
        <path d="M7.500 18l1.500-1 1 1 2-3 1 3 2-2 1 2 2-3 1 3 2-2 1 2 2-1 1 1-1 2-2-1-2 2-2-1.500-2 2-2-1.500-2 1-3-1z" fill="#f02a12" />
        <path d="M4 17C2 5 9 1.500 16 1.500S30 5 28 17" fill="none" stroke="#0a12d8" strokeWidth="2" />
        <path d="M7 12c-1 4-1 9 1 14l-2 1c-3-1-6-4-6-7s2-6 4-7zM25 12c1 4 1 9-1 14l2 1c3-1 6-4 6-7s-2-6-4-7z" fill="#0a12d8" />
      </svg>
    ),
  },
];

function Taskbar() {
  return (
    <footer className="flex h-[41px] shrink-0 items-stretch border-t border-[#1e1e1e] bg-[#2d2d2d] font-['Noto_Sans',sans-serif]">
      <button aria-label="Menu" className="flex w-[51px] items-center border-r border-[#454545] pl-[5px]">
        <svg width="32" height="32" viewBox="0 0 32 32" fill="none" stroke="#e8e8e8" aria-hidden="true">
          <circle cx="16" cy="16" r="14.800" strokeWidth="2.200" />
          <path strokeWidth="2.600" strokeLinecap="round" d="M8.500 9.500v9.500a4 4 0 0 0 4 4h7a4 4 0 0 0 4-4v-4.500a2.500 2.500 0 0 0-5 0v4M18.500 18.500v-4a2.500 2.500 0 0 0-5 0v4" />
        </svg>
      </button>
      <nav className="ml-2 flex gap-[2px]">
        {apps.map((a) => (
          <button key={a.name} aria-label={a.name} className={`flex w-[38px] items-center justify-center border-b-2 ${a.open ? "border-[#8c5bd8]" : "border-transparent"} ${a.active ? "bg-[#505050]" : ""}`}>
            {a.icon}
          </button>
        ))}
      </nav>
      <div className="ml-auto flex items-center gap-[10px] text-[#e8e8e8]">
        <button aria-label="Atualizações">
          <svg width="16" height="16" viewBox="0 0 16 16" aria-hidden="true"><path d="M8 .5C6 2 3 2.500 1 2.500 1 9 3 13.500 8 15.500c5-2 7-6.500 7-13-2 0-5-.5-7-2z" fill="#e8e8e8" /><path d="M8 3v10C5 11.500 3.500 8.500 3.200 4.200 5 4.200 6.700 3.800 8 3z" fill="#5a5a5a" /><circle cx="12" cy="12" r="3" fill="#e2552f" /></svg>
        </button>
        <button aria-label="Dispositivos">
          <svg width="16" height="16" viewBox="0 0 16 16" fill="none" stroke="currentColor" strokeWidth="1.500" aria-hidden="true"><rect x="1.800" y="1" width="12.500" height="14" rx="1" /><path d="M8 4 4.800 8.500h6.400zM4.800 10h6.400v1.600H4.800z" fill="currentColor" stroke="none" /></svg>
        </button>
        <button aria-label="Rede">
          <svg width="16" height="16" viewBox="0 0 16 16" fill="currentColor" aria-hidden="true"><path d="M5 1h6v5H5zM0 10h5v5H0zM11 10h5v5h-5z" /><path d="M8 5.500V8M2.500 10.500V8h11v2.500" fill="none" stroke="currentColor" strokeWidth="1.400" /></svg>
        </button>
        <button aria-label="Volume"><Speaker className="h-4 w-4" /></button>
        <time className="text-[13px] font-semibold">16:36</time>
        <span className="mr-1 -ml-[2px] h-[33px] w-2 bg-[#3f3f3f]" />
      </div>
    </footer>
  );
}

export default function App() {
  return (
    <div className="flex h-screen flex-col overflow-hidden bg-[#404040]">
      <main className="relative flex-1 overflow-hidden">
        <Browser />
        <FileManager />
        <Editor />
      </main>
      <Taskbar />
    </div>
  );
}
